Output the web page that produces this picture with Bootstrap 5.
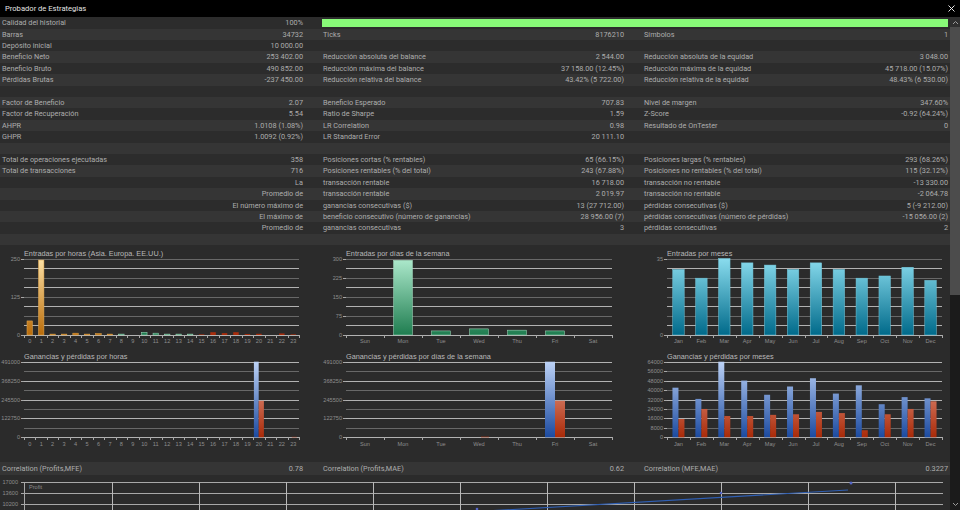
<!DOCTYPE html>
<html lang="es">
<head>
<meta charset="utf-8">
<title>Probador de Estrategias</title>
<link href="https://cdn.jsdelivr.net/npm/bootstrap@5.3.0/dist/css/bootstrap.min.css" rel="stylesheet">
<style>
html,body{height:510px;overflow:hidden;background:#2b2b2b}
body{font-family:Roboto,"Liberation Sans",sans-serif;font-size:7.3px;line-height:11.8px;color:#adadad}
.titlebar{height:17.3px;background:#000;color:#e4e4e4;font-size:7.6px;padding:0 5px}
.closex{background:none;border:0;padding:0;line-height:0;width:8px;height:8px}
.work{height:492.7px;overflow:hidden}
.main{width:950px;flex:none}
.stat{height:11.4px;background:#2c2c2c}
.stat:nth-child(even){background:#353535}
.c1,.c2,.c3{flex:none;height:100%}
.c1,.c2{width:321px;padding:0 18px 0 2px}
.c3{width:308px;padding:0 2px}
.quality{height:8px;border-radius:0;background:#88fa78;margin:2px 2px 0 1px}
.quality .progress-bar{background:#88fa78}
.charts{height:217px;background:#2b2b2b}
.cell{width:321px;flex:none}
.cell:nth-child(3n){width:308px}
.cell.r1{height:105px}
.cell.r2{height:112px}
.cell svg,.scatter{display:block}
.cor{height:13px;line-height:13px;background:#353535}
.scatter{background:#2b2b2b}
svg text{font-family:"Liberation Sans",Arial,sans-serif}
.ctitle{font-size:7.3px;fill:#b8b8b8}
.clabel{font-size:5.6px;fill:#8e8e8e}
.sb{width:10px;flex:none;background:#1b1b1b}
.sb-up{height:10px;background:#2f2f2f}
.sb-thumb{height:268px;background:#4c4c4c}
.sb-rest{flex:1}
.sb-down{height:10px}
</style>
</head>
<body>
<div class="titlebar d-flex align-items-center justify-content-between">
  <span>Probador de Estrategias</span>
  <button class="closex" aria-label="Cerrar"><svg width="7" height="7" viewBox="0 0 7 7"><path d="M.5.5l6 6M6.5.5l-6 6" stroke="#e8e8e8" stroke-width="1"/></svg></button>
</div>
<div class="work d-flex">
  <div class="main">
    <div>
      <div class="stat d-flex"><div class="c1 d-flex justify-content-between"><span>Calidad del historial</span><span>100%</span></div><div class="quality progress flex-grow-1"><div class="progress-bar w-100"></div></div></div>
      <div class="stat d-flex"><div class="c1 d-flex justify-content-between"><span>Barras</span><span>34732</span></div><div class="c2 d-flex justify-content-between"><span>Ticks</span><span>8176210</span></div><div class="c3 d-flex justify-content-between"><span>Símbolos</span><span>1</span></div></div>
      <div class="stat d-flex"><div class="c1 d-flex justify-content-between"><span>Depósito inicial</span><span>10 000.00</span></div></div>
      <div class="stat d-flex"><div class="c1 d-flex justify-content-between"><span>Beneficio Neto</span><span>253 402.00</span></div><div class="c2 d-flex justify-content-between"><span>Reducción absoluta del balance</span><span>2 544.00</span></div><div class="c3 d-flex justify-content-between"><span>Reducción absoluta de la equidad</span><span>3 048.00</span></div></div>
      <div class="stat d-flex"><div class="c1 d-flex justify-content-between"><span>Beneficio Bruto</span><span>490 852.00</span></div><div class="c2 d-flex justify-content-between"><span>Reducción máxima del balance</span><span>37 158.00 (12.45%)</span></div><div class="c3 d-flex justify-content-between"><span>Reducción máxima de la equidad</span><span>45 718.00 (15.07%)</span></div></div>
      <div class="stat d-flex"><div class="c1 d-flex justify-content-between"><span>Pérdidas Brutas</span><span>-237 450.00</span></div><div class="c2 d-flex justify-content-between"><span>Reducción relativa del balance</span><span>43.42% (5 722.00)</span></div><div class="c3 d-flex justify-content-between"><span>Reducción relativa de la equidad</span><span>48.43% (6 530.00)</span></div></div>
      <div class="stat"></div>
      <div class="stat d-flex"><div class="c1 d-flex justify-content-between"><span>Factor de Beneficio</span><span>2.07</span></div><div class="c2 d-flex justify-content-between"><span>Beneficio Esperado</span><span>707.83</span></div><div class="c3 d-flex justify-content-between"><span>Nivel de margen</span><span>347.60%</span></div></div>
      <div class="stat d-flex"><div class="c1 d-flex justify-content-between"><span>Factor de Recuperación</span><span>5.54</span></div><div class="c2 d-flex justify-content-between"><span>Ratio de Sharpe</span><span>1.59</span></div><div class="c3 d-flex justify-content-between"><span>Z-Score</span><span>-0.92 (64.24%)</span></div></div>
      <div class="stat d-flex"><div class="c1 d-flex justify-content-between"><span>AHPR</span><span>1.0108 (1.08%)</span></div><div class="c2 d-flex justify-content-between"><span>LR Correlation</span><span>0.98</span></div><div class="c3 d-flex justify-content-between"><span>Resultado de OnTester</span><span>0</span></div></div>
      <div class="stat d-flex"><div class="c1 d-flex justify-content-between"><span>GHPR</span><span>1.0092 (0.92%)</span></div><div class="c2 d-flex justify-content-between"><span>LR Standard Error</span><span>20 111.10</span></div></div>
      <div class="stat"></div>
      <div class="stat d-flex"><div class="c1 d-flex justify-content-between"><span>Total de operaciones ejecutadas</span><span>358</span></div><div class="c2 d-flex justify-content-between"><span>Posiciones cortas (% rentables)</span><span>65 (66.15%)</span></div><div class="c3 d-flex justify-content-between"><span>Posiciones largas (% rentables)</span><span>293 (68.26%)</span></div></div>
      <div class="stat d-flex"><div class="c1 d-flex justify-content-between"><span>Total de transacciones</span><span>716</span></div><div class="c2 d-flex justify-content-between"><span>Posiciones rentables (% del total)</span><span>243 (67.88%)</span></div><div class="c3 d-flex justify-content-between"><span>Posiciones no rentables (% del total)</span><span>115 (32.12%)</span></div></div>
      <div class="stat d-flex"><div class="c1 text-end">La</div><div class="c2 d-flex justify-content-between"><span>transacción rentable</span><span>16 718.00</span></div><div class="c3 d-flex justify-content-between"><span>transacción no rentable</span><span>-13 330.00</span></div></div>
      <div class="stat d-flex"><div class="c1 text-end">Promedio de</div><div class="c2 d-flex justify-content-between"><span>transacción rentable</span><span>2 019.97</span></div><div class="c3 d-flex justify-content-between"><span>transacción no rentable</span><span>-2 064.78</span></div></div>
      <div class="stat d-flex"><div class="c1 text-end">El número máximo de</div><div class="c2 d-flex justify-content-between"><span>ganancias consecutivas ($)</span><span>13 (27 712.00)</span></div><div class="c3 d-flex justify-content-between"><span>pérdidas consecutivas ($)</span><span>5 (-9 212.00)</span></div></div>
      <div class="stat d-flex"><div class="c1 text-end">El máximo de</div><div class="c2 d-flex justify-content-between"><span>beneficio consecutivo (número de ganancias)</span><span>28 956.00 (7)</span></div><div class="c3 d-flex justify-content-between"><span>pérdidas consecutivas (número de pérdidas)</span><span>-15 056.00 (2)</span></div></div>
      <div class="stat d-flex"><div class="c1 text-end">Promedio de</div><div class="c2 d-flex justify-content-between"><span>ganancias consecutivas</span><span>3</span></div><div class="c3 d-flex justify-content-between"><span>pérdidas consecutivas</span><span>2</span></div></div>
      <div class="stat"></div>
    </div>
    <div class="charts d-flex flex-wrap" id="charts"></div>
    <div class="cor d-flex"><div class="c1 d-flex justify-content-between"><span>Correlation (Profits,MFE)</span><span>0.78</span></div><div class="c2 d-flex justify-content-between"><span>Correlation (Profits,MAE)</span><span>0.62</span></div><div class="c3 d-flex justify-content-between"><span>Correlation (MFE,MAE)</span><span>0.3227</span></div></div>
    <svg class="scatter" id="scatter" width="950" height="36"></svg>
  </div>
  <div class="sb d-flex flex-column">
    <div class="sb-up d-flex align-items-center justify-content-center"><svg width="7" height="5" viewBox="0 0 7 5"><path d="M1 4l2.500-2.500L6 4" fill="none" stroke="#9a9a9a"/></svg></div>
    <div class="sb-thumb"></div>
    <div class="sb-rest"></div>
    <div class="sb-down d-flex align-items-center justify-content-center"><svg width="7" height="5" viewBox="0 0 7 5"><path d="M1 1l2.500 2.500L6 1" fill="none" stroke="#9a9a9a"/></svg></div>
  </div>
</div>
<script src="https://cdn.jsdelivr.net/npm/bootstrap@5.3.0/dist/js/bootstrap.bundle.min.js"></script>
<script>
var grads={o:['#fde2a6','#b96c0a','#e2a850'],g:['#aeeacd','#1f7d50','#a6dcc0'],t:['#8adcee','#006a8a','#74c6da'],b:['#bcd2f6','#1b4aa0',''],r:['#f2b0a0','#a92a08','']};
function defsFor(r,top,bot){return '<defs>'+Object.keys(grads).map(function(k){return '<linearGradient id="g'+r+k+'" gradientUnits="userSpaceOnUse" x1="0" y1="'+top+'" x2="0" y2="'+bot+'"><stop offset="0" stop-color="'+grads[k][0]+'"/><stop offset="1" stop-color="'+grads[k][1]+'"/></linearGradient>';}).join('')+'</defs>';}
var HOURS=[];for(var i=0;i<24;i++)HOURS.push(String(i));
var DAYS=['Sun','Mon','Tue','Wed','Thu','Fri','Sat'];
var MON=['Jan','Feb','Mar','Apr','May','Jun','Jul','Aug','Sep','Oct','Nov','Dec'];
function line(a,b,c,d,col){return '<line x1="'+a+'" y1="'+b+'" x2="'+c+'" y2="'+d+'" stroke="'+col+'" shape-rendering="crispEdges"/>';}
function chart(o){
  var h=o.r==1?105:112,top=o.r==1?13.5:11.7,bot=o.r==1?90:87.3,ty=o.r==1?11:9,lab=o.r==1?98:96;
  var s='<svg width="'+(o.w||321)+'" height="'+h+'">'+defsFor(o.r,top,bot);
  s+='<text class="ctitle" x="'+o.x0+'" y="'+ty+'">'+o.title+'</text>';
  for(var i=0;i<9;i++){
    var y=Math.round(top+(bot-top)*i/8)+.5;
    var bright=o.r==1?(i%2==1||i==8):(i%2==0);
    s+=line(o.x0,y,o.x1,y,bright?'#b2b2b2':'#686868');
  }
  var sl=(o.x1-o.x0)/o.xl.length;
  o.bars.forEach(function(b){
    var cx=o.x0+sl*(b[0]+.5)+(b[1]||0);
    var H=b[2]/o.max*(bot-top);
    var g=grads[b[4]];
    s+='<rect x="'+(cx-b[3]/2)+'" y="'+(bot-H)+'" width="'+b[3]+'" height="'+H+'" fill="url(#g'+o.r+b[4]+')"'+(g[2]?' stroke="'+g[2]+'" stroke-width=".5"':'')+'/>';
  });
  for(i=0;i<=o.xl.length;i++){var x=Math.round(o.x0+sl*i)+.5;s+=line(x,bot,x,bot+3,'#a8a8a8');}
  o.xl.forEach(function(t,i){s+='<text class="clabel" text-anchor="middle" x="'+(o.x0+sl*(i+.5))+'" y="'+lab+'">'+t+'</text>';});
  o.yl.forEach(function(t,i){
    var y=top+(bot-top)*t[0];
    s+=line(o.x0-3,Math.round(y)+.5,o.x0,Math.round(y)+.5,'#a8a8a8');
    s+='<text class="clabel" text-anchor="end" x="'+(o.x0-4)+'" y="'+(y+2)+'">'+t[1]+'</text>';
  });
  return '<div class="cell r'+o.r+'">'+s+'</svg></div>';
}
function fives(a){return a.map(function(t,i){return [i/(a.length-1),t];});}
var h=[46,245,3,3,6,3,5,3,3,0,9,6,3,3,3,2,9,6,9,3,4,0,5,2];
var d=[0,293,16,24,19,16,0];
var m=[30,26,35,33,32,30,33,30,26,27,31,25];
var mb=[42000,32500,64000,48000,36000,43000,50000,37000,44000,28000,34000,33000];
var mr=[15500,24000,18000,18000,19000,19500,21500,20500,6000,19500,24000,30500];
var html='';
html+=chart({r:1,title:'Entradas por horas (Asia. Europa. EE.UU.)',x0:24,x1:299,xl:HOURS,max:250,yl:fives(['250','125','0']),bars:h.map(function(v,i){return [i,0,v,5.5,i<8?'o':i<15?'g':'r'];}).filter(function(b){return b[2]>0;})});
html+=chart({r:1,title:'Entradas por días de la semana',x0:25,x1:291,xl:DAYS,max:300,yl:fives(['300','225','150','75','0']),bars:d.map(function(v,i){return [i,0,v,19,'g'];}).filter(function(b){return b[2]>0;})});
html+=chart({r:1,w:308,title:'Entradas por meses',x0:25,x1:300,xl:MON,max:35,yl:[[0,'35'],[1,'0']],bars:m.map(function(v,i){return [i,0,v,11.5,'t'];})});
var y5=fives(['491000','368250','245500','122750','0']);
html+=chart({r:2,title:'Ganancias y pérdidas por horas',x0:24,x1:299,xl:HOURS,max:491000,yl:y5,bars:[[20,-2.600,491000,4.800,'b'],[20,2.400,237000,5.200,'r'],[23,1,3000,5,'r']]});
html+=chart({r:2,title:'Ganancias y pérdidas por días de la semana',x0:25,x1:291,xl:DAYS,max:491000,yl:y5,bars:[[5,-5,491000,10,'b'],[5,5,237000,10,'r'],[3,6,4000,8,'r']]});
var bm=[];mb.forEach(function(v,i){bm.push([i,-3,v,6,'b']);bm.push([i,3,mr[i],6,'r']);});
html+=chart({r:2,w:308,title:'Ganancias y pérdidas por meses',x0:25,x1:300,xl:MON,max:64000,yl:fives(['64000','56000','48000','40000','32000','24000','16000','8000','0']),bars:bm});
document.getElementById('charts').innerHTML=html;

var s='';
[7,18,29].forEach(function(y,i){
  s+=line(24,y+.5,943,y+.5,'#a8a8a8');
  s+=line(21,y+.5,24,y+.5,'#a8a8a8');
  s+='<text class="clabel" text-anchor="end" x="18" y="'+(y+2)+'">'+['17000','13600','10200'][i]+'</text>';
});
s+=line(24.500,7,24.500,36,'#a8a8a8');
for(var i=0;i<11;i++){var x=112+i*87+.5;s+=line(x,7,x,36,'#b8b8b8');}
s+='<text class="clabel" x="29" y="14">Profit</text>';
s+='<line x1="400" y1="41" x2="848" y2="15" stroke="#2f5fb4" stroke-width="1.200"/>';
s+='<circle cx="851" cy="8" r="1.500" fill="#5566c8"/><circle cx="721" cy="18" r="1.300" fill="#5566c8"/><circle cx="477" cy="34" r="1.300" fill="#5566c8"/>';
document.getElementById('scatter').innerHTML=s;
</script>
</body>
</html>
